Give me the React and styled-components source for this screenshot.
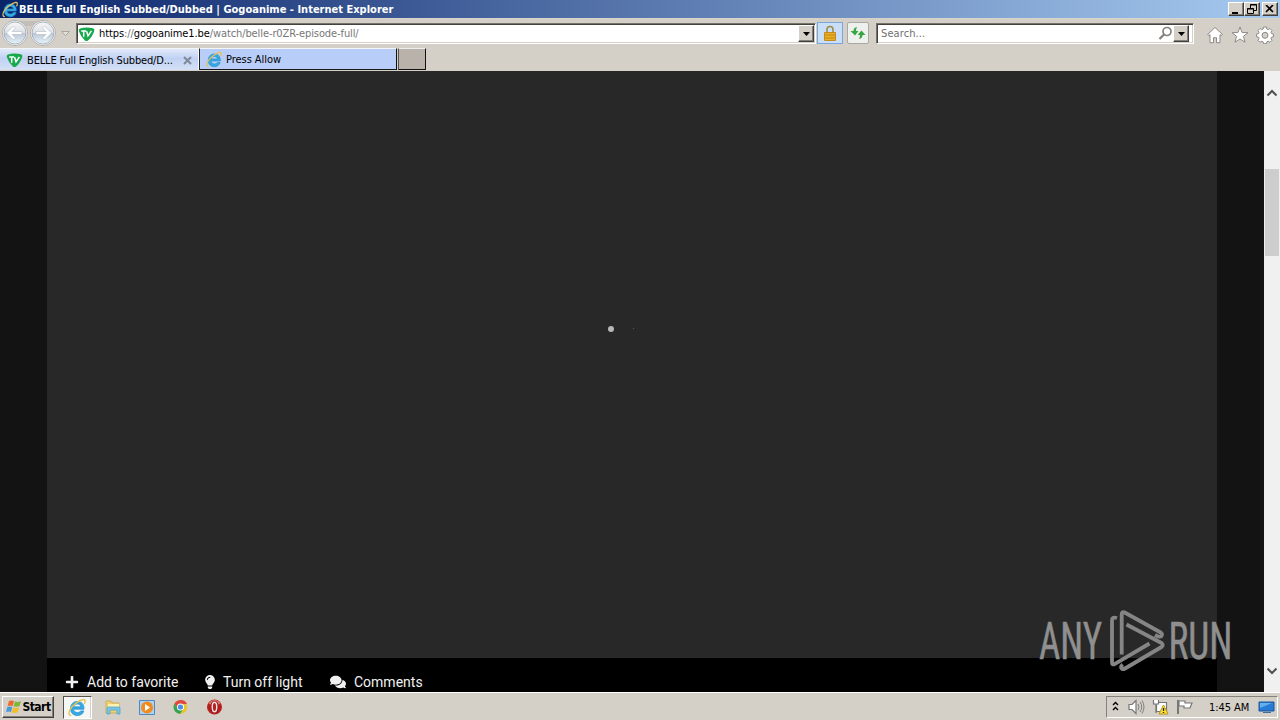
import React from 'react';
import styled, { createGlobalStyle } from 'styled-components';
import { FaPlus, FaLightbulb, FaComments } from 'react-icons/fa';

const GlobalStyle = createGlobalStyle`
        * { box-sizing: border-box; }
        body { margin: 0; overflow: hidden; background: #d4cfc7; }
        svg { display: block; flex: none; }
`;
const Screen = styled.div`
        width: 1280px;
        height: 720px;
        display: flex;
        flex-direction: column;
        font-family: "DejaVu Sans Condensed", "DejaVu Sans", sans-serif;
        font-stretch: condensed;
        font-size: 11px;
        color: #000;
`;
const Label = styled.span`
        white-space: pre;
        line-height: 14px;
        letter-spacing: ${props => props.$spacing || 0}px;
        color: ${props => props.$color || 'inherit'};
`;
const TitleBar = styled.header`
        height: 18px;
        display: flex;
        align-items: center;
        padding: 0 2px;
        background: linear-gradient(90deg, #0a246a, #a6caf0);
        color: #fff;
        font-weight: bold;
`;
const Title = styled(Label)`
        flex: 1;
        padding-top: 1px;
`;
const Raised = styled.button`
        display: flex;
        align-items: center;
        justify-content: center;
        padding: 0;
        flex: none;
        color: #000;
        background: #d4cfc7;
        border: 1px solid;
        border-color: #fff #404040 #404040 #fff;
        box-shadow: inset -1px -1px #858078;
`;
const WindowButton = styled(Raised)`
        width: ${props => props.$width || 16}px;
        height: 14px;
        margin-left: ${props => props.$gap || 0}px;
`;
const ToolBar = styled.div`
        height: 30px;
        display: flex;
        align-items: flex-start;
        padding-top: 4px;
        background: #d4cfc7;
        border-top: 1px solid #d8d4cb;
`;
const NavButtons = styled.div`
        width: 76px;
        height: 26px;
        margin-top: -4px;
`;
const Field = styled.div`
        width: ${props => props.$width}px;
        height: 21px;
        display: flex;
        align-items: center;
        margin-left: ${props => props.$gap || 0}px;
        padding: 0 0 0 1px;
        background: #fff;
        border: 1px solid;
        border-color: #77726b #fff #fff #77726b;
        box-shadow: inset 1px 1px #45413c, inset -1px -1px #d4cfc7;
`;
const FieldText = styled.div`
        flex: 1;
        margin-left: ${props => props.$left || 3}px;
        padding-top: 1px;
        display: flex;
`;
const DropButton = styled(Raised)`
        width: 16px;
        height: 17px;
        margin-right: ${props => props.$right}px;
`;
const LockButton = styled.div`
        width: 26px;
        height: 22px;
        margin: -1px 0 0 1px;
        display: flex;
        align-items: center;
        justify-content: center;
        background: #c9def7;
        border: 1px solid #78a6df;
`;
const RefreshButton = styled.div`
        width: 22px;
        height: 22px;
        margin: -1px 0 0 4px;
        display: flex;
        align-items: center;
        justify-content: center;
        background: #edf0ec;
        border: 1px solid #aaa8a1;
        border-radius: 2px;
`;
const Commands = styled.div`
        display: flex;
        gap: 7px;
        margin: 3px 0 0 12px;
`;
const TabRow = styled.div`
        height: 23px;
        display: flex;
        background: #d4cfc7;
`;
const Tab = styled.div`
        width: ${props => props.$width}px;
        height: 22px;
        display: flex;
        align-items: center;
        padding: 1px 6px 0 6px;
        background: ${props => props.$active ? 'linear-gradient(#e2eaf9, #bfd1f3 45%, #d5e0f5)' : '#b8cdf7'};
        border-top: 1px solid #f4f5f8;
        border-right: ${props => props.$active ? '1px solid #f7f7f7' : '1px solid #111'};
        border-bottom: ${props => props.$active ? '0' : '1px solid #191919'};
        border-left: ${props => props.$active ? '0' : '1px solid #222'};
`;
const TabText = styled(Label)`
        flex: 1;
        margin-left: ${props => props.$left}px;
        padding-top: 1px;
`;
const NewTab = styled.div`
        width: 28px;
        height: 22px;
        margin-left: 1px;
        background: #b8b2aa;
        border: 1px solid;
        border-color: #eee #111 #111 #555;
`;
const Viewport = styled.main`
        height: 621px;
        display: flex;
        position: relative;
        background: #131313;
`;
const Page = styled.section`
        width: 1170px;
        margin-left: 47px;
        display: flex;
        flex-direction: column;
        background: #000;
`;
const Player = styled.div`
        height: 587px;
        display: flex;
        align-items: center;
        justify-content: center;
        background: #282828;
`;
const Loader = styled.div`
        width: 48px;
        display: flex;
        align-items: center;
        justify-content: space-between;
        padding: 0 11px 0 11px;
        margin: 0 22px 72px 0;
`;
const Dot = styled.i`
        width: ${props => props.$size}px;
        height: ${props => props.$size}px;
        border-radius: 50%;
        background: ${props => props.$color};
`;
const Actions = styled.div`
        display: flex;
        align-items: center;
        height: 34px;
        padding: 14px 0 0 18px;
        color: #f1f1f1;
        font: 14px/18px Roboto, sans-serif;
`;
const Action = styled.div`
        width: ${props => props.$width}px;
        display: flex;
        align-items: center;
        gap: ${props => props.$gap}px;
        white-space: nowrap;
`;
const ScrollBar = styled.div`
        width: 16px;
        margin-left: auto;
        display: flex;
        flex-direction: column;
        align-items: center;
        background: #f0f0f0;
`;
const Thumb = styled.div`
        width: 14px;
        height: 87px;
        margin: 72px 0 409px;
        background: #cdcdcd;
`;
const Watermark = styled.svg`
        position: absolute;
        left: 1030px;
        top: 529px;
        overflow: visible;
`;
const TaskBar = styled.footer`
        height: 28px;
        display: flex;
        align-items: flex-start;
        padding: 3px 2px 0;
        background: #d4cfc7;
        border-top: 1px solid #fff;
`;
const StartButton = styled(Raised)`
        width: 52px;
        height: 22px;
        gap: 0;
        font: inherit;
        font-size: 12px;
        font-weight: bold;
`;
const QuickLaunch = styled.div`
        display: flex;
        gap: 18px;
        margin: 3px 0 0 13px;
`;
const ActiveTask = styled.div`
        width: 29px;
        height: 23px;
        margin-left: 9px;
        display: flex;
        align-items: center;
        justify-content: center;
        background: #f6f6f5;
        border: 1px solid;
        border-color: #55514c #fff #fff #55514c;
        box-shadow: inset -1px 0 #d4cfc7;
`;
const Tray = styled.div`
        width: 172px;
        height: 22px;
        margin-left: auto;
        display: flex;
        align-items: center;
        padding: 0 3px 0 4px;
        border: 1px solid;
        border-color: #86817a #fff #fff #86817a;
`;
const Clock = styled(Label)`
        margin: 1px 9px 0 13px;
`;

function IEIcon({ size = 16 }) {
    return (
        <svg width={size} height={size} viewBox="0 0 18 18" fill="none">
            <path d="M15.1 10.6H5.3c.2 2 1.5 3.1 3.6 3.1 1.7 0 2.7-.7 3.1-1.5h3c-.8 2.9-3.2 4.4-6.1 4.4-4 0-6.500-2.700-6.500-6.500C2.400 6 5 3.200 8.800 3.200c4.200 0 6.700 2.900 6.300 7.400ZM5.400 8.400h6.700c-.2-1.700-1.400-2.700-3.200-2.700-1.900 0-3.100 1-3.500 2.700Z" fill="#36a9e2" stroke="#2492d2" strokeWidth=".7" />
            <path d="M15.400 5.700c1.400-2.800 1-4.500-.8-4.300C11.400 1.800 4.300 6.400 1.900 11.100.4 14.100.5 16.800 3.100 16.400" stroke="#e5c354" strokeWidth="1.300" />
        </svg>
    );
}

function SiteIcon() {
    return (
        <svg width="17" height="16" viewBox="0 0 17 16">
            <path d="M2 2.500Q8 .5 15 2.200q2 .7 1.200 3-2.400 6.500-6.500 9.500-1.600 1-3-.5Q2.300 10 .8 5q-.5-2 1.200-2.500Z" fill="#18a94c" />
            <path d="M3.200 5h5M5.700 5v5.800M8.600 5.200 10 9.800l3.400-5" fill="none" stroke="#fff" strokeWidth="1.500" />
        </svg>
    );
}

function Arrow() {
    return <svg width="7" height="4"><path d="M0 0h7L3.500 4Z" fill="#000" /></svg>;
}

function HistoryButtons() {
    return (
        <svg width="72" height="28" viewBox="0 0 72 28">
            <defs>
                <linearGradient id="glass" x2="0" y2="1">
                    <stop stopColor="#f7f7f7" />
                    <stop offset=".48" stopColor="#dce1e7" />
                    <stop offset=".5" stopColor="#b9c5d3" />
                    <stop offset="1" stopColor="#e8f4fc" />
                </linearGradient>
            </defs>
            <path d="M15 2h28v3q-14 4-28 0Z" fill="#c2beb8" />
            {[15, 43].map(x => (
                <g key={x}>
                    <circle cx={x} cy="14" r="12.600" fill="#f4f4f4" stroke="#aaa7a3" strokeWidth=".8" />
                    <circle cx={x} cy="14" r="11" fill="url(#glass)" stroke="#98a4b2" strokeWidth=".8" />
                </g>
            ))}
            <g fill="#fff" stroke="#a7b0bc" strokeWidth=".5" strokeLinejoin="round">
                <path d="m6.500 14 7-7 2 2-3.500 3.500h10v3H12l3.500 3.500-2 2Z" />
                <path d="m51.500 14-7-7-2 2 3.500 3.500H36v3h10l-3.500 3.500 2 2Z" />
            </g>
            <path d="M61.500 12.500h8l-4 4Z" fill="#e4e0da" stroke="#aaa59f" />
        </svg>
    );
}

function Logo() {
    return (
        <Watermark width="210" height="80" viewBox="0 0 210 80">
            <g fill="#8f8f8f" stroke="#8f8f8f" strokeWidth=".5" fontFamily="Roboto, sans-serif" fontSize="51" fontWeight="400">
                <text x="9" y="58.500" textLength="63" lengthAdjust="spacingAndGlyphs">ANY</text>
                <text x="138.500" y="58.500" textLength="64" lengthAdjust="spacingAndGlyphs">RUN</text>
            </g>
            <g fill="none" stroke="#858585" strokeWidth="3.800" strokeLinejoin="round">
                <path d="M91.700 54.500V14.500q0-3.500 3-2l36 20q2 1.500.8 3.500-1.500 1.800-6.500-1" />
                <path d="m96.500 24.500 35 18.500q2.500 2 0 4L95 68.500q-2.500 1.500-3.700-.5-.8-1.700 1.500-3.500" />
                <path d="M87 18q-5-1.500-5 2v42.500q0 3 3 1.300L119.500 43.500" />
            </g>
        </Watermark>
    );
}

function BrowserChrome() {
    return (
        <>
            <TitleBar>
                <IEIcon size={17} />
                <Title $spacing={0.007}>BELLE Full English Subbed/Dubbed | Gogoanime - Internet Explorer</Title>
                <WindowButton><svg width="10" height="9"><path d="M1 7h6v2H1z" /></svg></WindowButton>
                <WindowButton>
                    <svg width="10" height="10" fill="none" stroke="#000"><path d="M3.500 4V.5h6v6H7M3 1h7M.5 4.500h6v5h-6zM0 5h7" /></svg>
                </WindowButton>
                <WindowButton $gap={2}><svg width="10" height="8" stroke="#000" strokeWidth="1.700"><path d="m1 0 7 7m0-7L1 7" /></svg></WindowButton>
            </TitleBar>
            <ToolBar>
                <NavButtons><HistoryButtons /></NavButtons>
                <Field $width={740}>
                    <SiteIcon />
                    <FieldText $left={4}>
                        <Label $spacing={-0.1}>https</Label><Label $color="#777" $spacing={-0.1}>://</Label><Label $spacing={-0.1}>gogoanime1.be</Label><Label $color="#777" $spacing={-0.1}>/watch/belle-r0ZR-episode-full/</Label>
                    </FieldText>
                    <DropButton $right={1}><Arrow /></DropButton>
                </Field>
                <LockButton>
                    <svg width="15" height="17" viewBox="0 0 15 17">
                        <path d="M4 8V4.500a3 3 0 0 1 6 0V8" fill="none" stroke="#a08a4b" strokeWidth="1.600" />
                        <path d="M1.500 7.500h11v8h-11z" fill="#eaae24" stroke="#c38b22" />
                        <path d="M2 10h10M2 13h10" stroke="#c68916" />
                    </svg>
                </LockButton>
                <RefreshButton>
                    <svg width="16" height="16" viewBox="0 0 16 16" fill="#36a642">
                        <path d="M7 2Q3.500 2.500 3.500 6H.5L5 10.500 8.500 6H6q0-2 1-4ZM9 14q3.500-.5 3.500-4h3L11.500 5.500 7.500 10H10q0 2-1 4Z" />
                    </svg>
                </RefreshButton>
                <Field $width={318} $gap={7}>
                    <FieldText><Label $color="#707070" $spacing={0.1}>Search...</Label></FieldText>
                    <svg width="15" height="15" viewBox="0 0 15 15" fill="none" stroke="#85817e" strokeWidth="1.700"><circle cx="9" cy="5.500" r="4" /><path d="m6 8.500-4.500 4.500" strokeWidth="2.300" /></svg>
                    <DropButton $right={4}><Arrow /></DropButton>
                </Field>
                <Commands>
                    <svg width="18" height="18" viewBox="0 0 18 18" fill="#fff" stroke="#8d8b87"><path d="m9 1.500 7.500 7-1.500 1-1-.8v8h-3.500v-5h-3v5H4v-8l-1 .8-1.500-1Z" /></svg>
                    <svg width="18" height="18" viewBox="0 0 18 18" fill="#fff" stroke="#8d8b87"><path d="m9 1 2.100 5.500 5.900.2-4.600 3.600 1.600 5.900L9 13l-5 3.200 1.600-5.900L1 6.700l5.900-.2Z" /></svg>
                    <svg width="18" height="18" viewBox="0 0 18 18" fill="#fff" stroke="#8d8b87">
                        <path d="m7.500 1 3 0 .4 2 1.300.6 1.800-1.100 2 2-1.100 1.800.6 1.300 1.900.4v2.800l-1.900.4-.6 1.300 1.100 1.800-2 2-1.800-1.100-1.300.6-.4 1.900h-3l-.4-1.900-1.300-.6L4 16.300l-2-2 1.100-1.800-.6-1.300-1.900-.4V8l1.900-.4.6-1.300L2 4.500l2-2 1.800 1.100L7.100 3Z" />
                        <circle cx="9" cy="9.300" r="3" fill="#d4cfc7" />
                    </svg>
                </Commands>
            </ToolBar>
            <TabRow>
                <Tab $active $width={199}>
                    <SiteIcon />
                    <TabText $left={4} $spacing={-0.15}>BELLE Full English Subbed/D...</TabText>
                    <svg width="9" height="9" stroke="#818998" strokeWidth="2"><path d="m1 1 7 7m0-7L1 8" /></svg>
                </Tab>
                <Tab $width={198}><IEIcon size={17} /><TabText $left={3} $spacing={-0.05}>Press Allow</TabText></Tab>
                <NewTab />
            </TabRow>
        </>
    );
}

export default function App() {
    return (
        <Screen>
            <GlobalStyle />
            <BrowserChrome />
            <Viewport>
                <Page>
                    <Player><Loader><Dot $size={6} $color="#b8b8b8" /><Dot $size={1} $color="#666" /></Loader></Player>
                    <Actions>
                        <Action $width={138} $gap={8}><FaPlus size={14} />Add to favorite</Action>
                        <Action $width={127} $gap={6}><FaLightbulb size={14} />Turn off light</Action>
                        <Action $width={110} $gap={8}><FaComments size={16} />Comments</Action>
                    </Actions>
                </Page>
                <ScrollBar>
                    <svg width="16" height="26" fill="none" stroke="#505050" strokeWidth="2"><path d="m3.500 24.500 4.500-4.500 4.500 4.500" /></svg>
                    <Thumb />
                    <svg width="16" height="16" fill="none" stroke="#505050" strokeWidth="2"><path d="m3.500 3.500 4.500 4.500 4.500-4.500" /></svg>
                </ScrollBar>
                <Logo />
            </Viewport>
            <TaskBar>
                <StartButton>
                    <svg width="17" height="16" viewBox="0 0 17 16">
                        <path d="M4 2q3-1 5 0L7.700 7q-2-1-5 0Z" fill="#ef672c" />
                        <path d="M10 2.500q3 1 6-.5l-1.400 5q-3 1.300-6 .3Z" fill="#7cb83c" />
                        <path d="M2.300 8q3-1 5 0L6 13q-2-1-5 0Z" fill="#479bdc" />
                        <path d="M8.200 8.500q3 1 6-.3l-1.400 5q-3 1.300-6 .3Z" fill="#f5bd29" />
                    </svg>
                    <Label $spacing={-0.5}>Start</Label>
                </StartButton>
                <ActiveTask><IEIcon size={19} /></ActiveTask>
                <QuickLaunch>
                    <svg width="16" height="17" viewBox="0 0 16 17">
                        <path d="M1 3.500V2h5l1 2h7v10H1Z" fill="#eed071" stroke="#c6a548" strokeWidth=".7" />
                        <path d="M3 5h11v4H3z" fill="#fff1ae" />
                        <path d="M2 15V9q0-1 1-1h11q1 0 1 1v6h-3v-4H5v4Z" fill="#78c5e6" stroke="#4b9fc8" strokeWidth=".7" />
                    </svg>
                    <svg width="16" height="17" viewBox="0 0 16 17">
                        <path d="M.5 1.500h15v14H.5z" fill="#acd3f3" stroke="#4f87bf" />
                        <circle cx="8" cy="8.500" r="6" fill="#f18b1d" />
                        <path d="m6 5 5 3.500L6 12Z" fill="#fff" />
                    </svg>
                    <svg width="16" height="17" viewBox="0 0 16 17">
                        <circle cx="7.500" cy="8" r="6.800" fill="#eac42b" />
                        <path d="M1.500 4.500a7 7 0 0 1 12.500.5H7.500Q4 5.500 4.500 9.500Z" fill="#df483c" />
                        <path d="M1.500 4.500A7 7 0 0 0 7 15l3-4.500Q6.500 12.500 4.500 9.500Z" fill="#35a35a" />
                        <circle cx="7.500" cy="8" r="3.500" fill="#fff" /><circle cx="7.500" cy="8" r="2.600" fill="#4b8fe7" />
                    </svg>
                    <svg width="16" height="17" viewBox="0 0 16 17">
                        <circle cx="7.500" cy="8" r="7.500" fill="#b71e1e" />
                        <path d="M1.500 4.500a7 7 0 0 1 12 0q-6 3-12 0Z" fill="#e2786b" />
                        <ellipse cx="7.500" cy="8" rx="2.500" ry="5" fill="#c52b29" stroke="#800c10" strokeWidth="2.500" />
                        <ellipse cx="7.500" cy="8" rx="2.300" ry="4.800" fill="#b52222" stroke="#f4e3df" strokeWidth="1.500" />
                    </svg>
                </QuickLaunch>
                <Tray>
                    <svg width="9" height="12" fill="none" stroke="#000" strokeWidth="1.400"><path d="m2 4 2.500-2.500L7 4M2 9l2.500-2.500L7 9" /></svg>
                    <svg width="76" height="18" viewBox="0 0 76 18">
                        <g fill="#fff" stroke="#777" strokeWidth="1.200">
                            <path d="M9 6.500h3l4-4v13l-4-4H9Z" />
                            <path d="M18 6q2 3 0 6m2-8q3.500 5 0 10m2-11.500q4 6.500 0 13" fill="none" strokeWidth=".9" />
                            <path d="M36.500 4.500h10v9h-10z" />
                            <path d="M33.500 2v4h5V2M36 6v9" />
                            <path d="M58 2v14" strokeWidth="2" />
                            <path d="M59 3h6v2h7l-2 5h-6V8h-5Z" />
                        </g>
                        <path d="m43.500 7 4.500 9h-9Z" fill="#ffe22b" stroke="#b9941d" />
                        <path d="M43.500 10v3m0 1v1" stroke="#222" strokeWidth="1.300" />
                    </svg>
                    <Clock $spacing={-0.05}>1:45 AM</Clock>
                    <svg width="17" height="15" viewBox="0 0 17 15">
                        <path d="M1 2h15v9H1z" fill="#287bd5" stroke="#16549b" />
                        <path d="M2 3h12L2 8Z" fill="#65afed" /><path d="M5 12h8v1H5z" fill="#446e98" />
                    </svg>
                </Tray>
            </TaskBar>
        </Screen>
    );
}
